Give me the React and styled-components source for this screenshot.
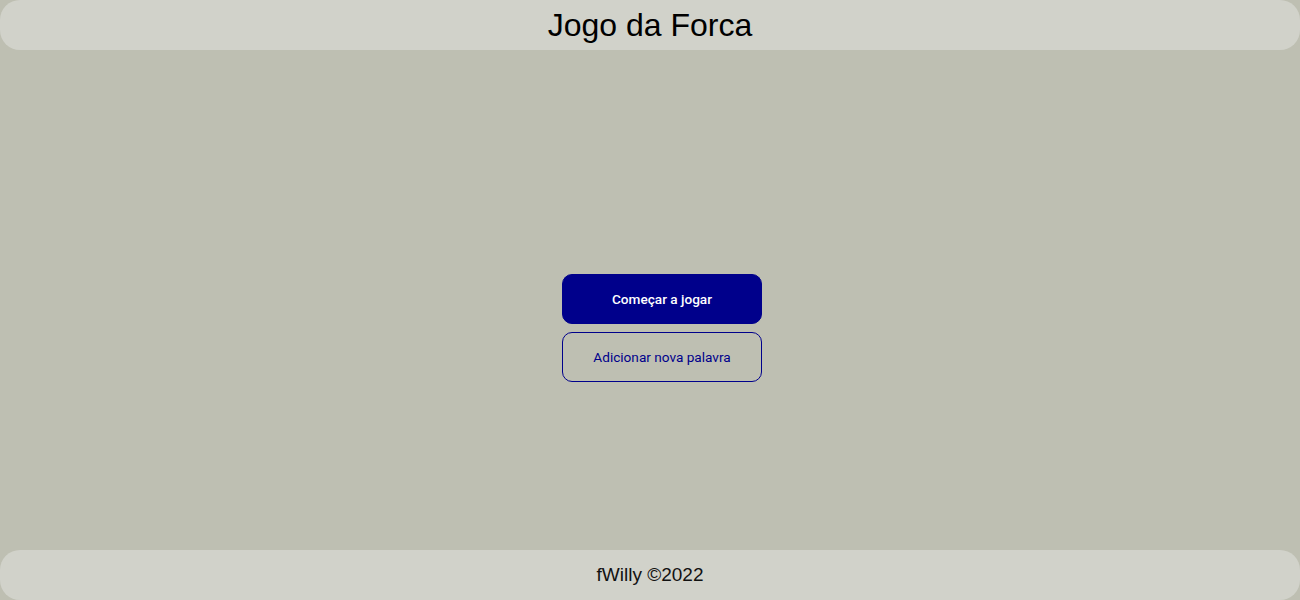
import React from 'react'
import styled, { createGlobalStyle } from 'styled-components'

const GlobalStyle = createGlobalStyle`
  html, body {
    margin: 0;
    padding: 0;
    background: #bebfb2;
    font-family: 'Liberation Sans', Arial, sans-serif;
  }
`

const Page = styled.div`
  display: flex;
  flex-direction: column;
  height: 600px;
  background: #bebfb2;
`

const Bar = styled.div`
  height: 50px;
  flex-shrink: 0;
  display: flex;
  align-items: center;
  justify-content: center;
  background: #d1d2ca;
  border-radius: 20px;
  color: #000;
`

const Title = styled.h1`
  margin: 0;
  font-weight: normal;
  font-size: 32px;
`

const FooterText = styled.p`
  margin: 0;
  font-size: 19px;
  color: #111;
`

const Main = styled.main`
  flex: 1;
  display: flex;
  flex-direction: column;
  align-items: center;
  justify-content: center;
  gap: 8px;
  padding-top: 56px;
  padding-left: 24px;
`

const Button = styled.button`
  width: 200px;
  height: 50px;
  border-radius: 10px;
  font-family: Roboto, 'Liberation Sans', sans-serif;
  font-size: 13.6px;
  font-weight: ${p => (p.primary ? 500 : 400)};
  cursor: pointer;
  background: ${p => (p.primary ? '#00008b' : 'transparent')};
  color: ${p => (p.primary ? '#fff' : '#00008b')};
  border: 1px solid #00008b;
`

function App() {
  return (
    <Page>
      <GlobalStyle />
      <Bar>
        <Title>Jogo da Forca</Title>
      </Bar>
      <Main>
        <Button primary>Começar a jogar</Button>
        <Button>Adicionar nova palavra</Button>
      </Main>
      <Bar>
        <FooterText>fWilly ©2022</FooterText>
      </Bar>
    </Page>
  )
}

export default App
